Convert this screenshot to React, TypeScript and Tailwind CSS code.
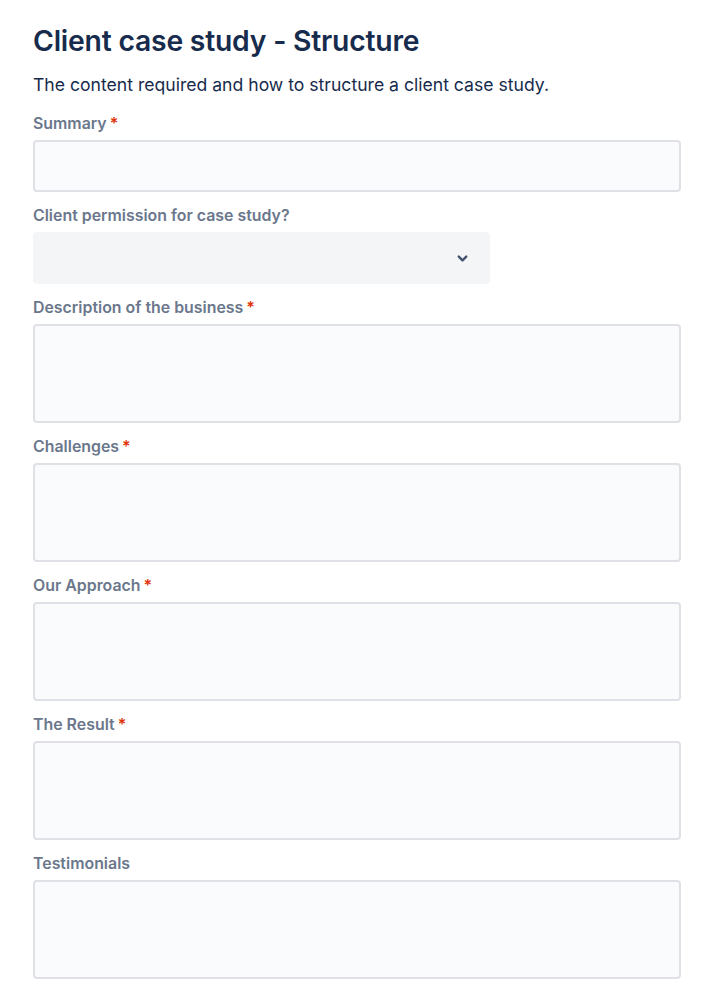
import React from "react";

const font = { fontFamily: "Inter, 'Noto Sans', sans-serif" };

function Label({ text, required }: { text: string; required?: boolean }) {
  return (
    <div className="flex items-center h-5 text-[15.9px] leading-5 font-semibold text-[#6b778c]">
      <span>{text}</span>
      {required && <span className="ml-[3px] text-[#de350b]">*</span>}
    </div>
  );
}

function Area({ label, required }: { label: string; required?: boolean }) {
  return (
    <div className="flex flex-col gap-[6px]">
      <Label text={label} required={required} />
      <div className="h-[99px] w-full rounded-[4px] border-2 border-[#dfe1e6] bg-[#fafbfc]" />
    </div>
  );
}

export default function App() {
  return (
    <div className="min-h-[999px] w-[701px] bg-white px-[33px] pt-[22px]" style={font}>
      <h1 className="text-[28.3px] leading-[38px] font-semibold text-[#172b4d] tracking-[-0.2px]">
        Client case study - Structure
      </h1>
      <p className="mt-[12px] text-[17.6px] leading-[26px] text-[#172b4d]">
        The content required and how to structure a client case study.
      </p>
      <div className="mt-[16px] flex flex-col gap-[14px] w-[648px]">
        <div className="flex flex-col gap-[6px]">
          <Label text="Summary" required />
          <div className="h-[52px] w-full rounded-[4px] border-2 border-[#dfe1e6] bg-[#fafbfc]" />
        </div>
        <div className="flex flex-col gap-[6px]">
          <Label text="Client permission for case study?" />
          <div className="h-[52px] w-[457px] rounded-[4px] bg-[#f4f5f7] flex items-center justify-end pr-[20px]">
            <svg width="15" height="15" viewBox="0 0 24 24" fill="none">
              <path d="M6 9l6 6 6-6" stroke="#42526e" strokeWidth="3.8" strokeLinecap="round" strokeLinejoin="round" />
            </svg>
          </div>
        </div>
        <Area label="Description of the business" required />
        <Area label="Challenges" required />
        <Area label="Our Approach" required />
        <Area label="The Result" required />
        <Area label="Testimonials" />
      </div>
    </div>
  );
}
